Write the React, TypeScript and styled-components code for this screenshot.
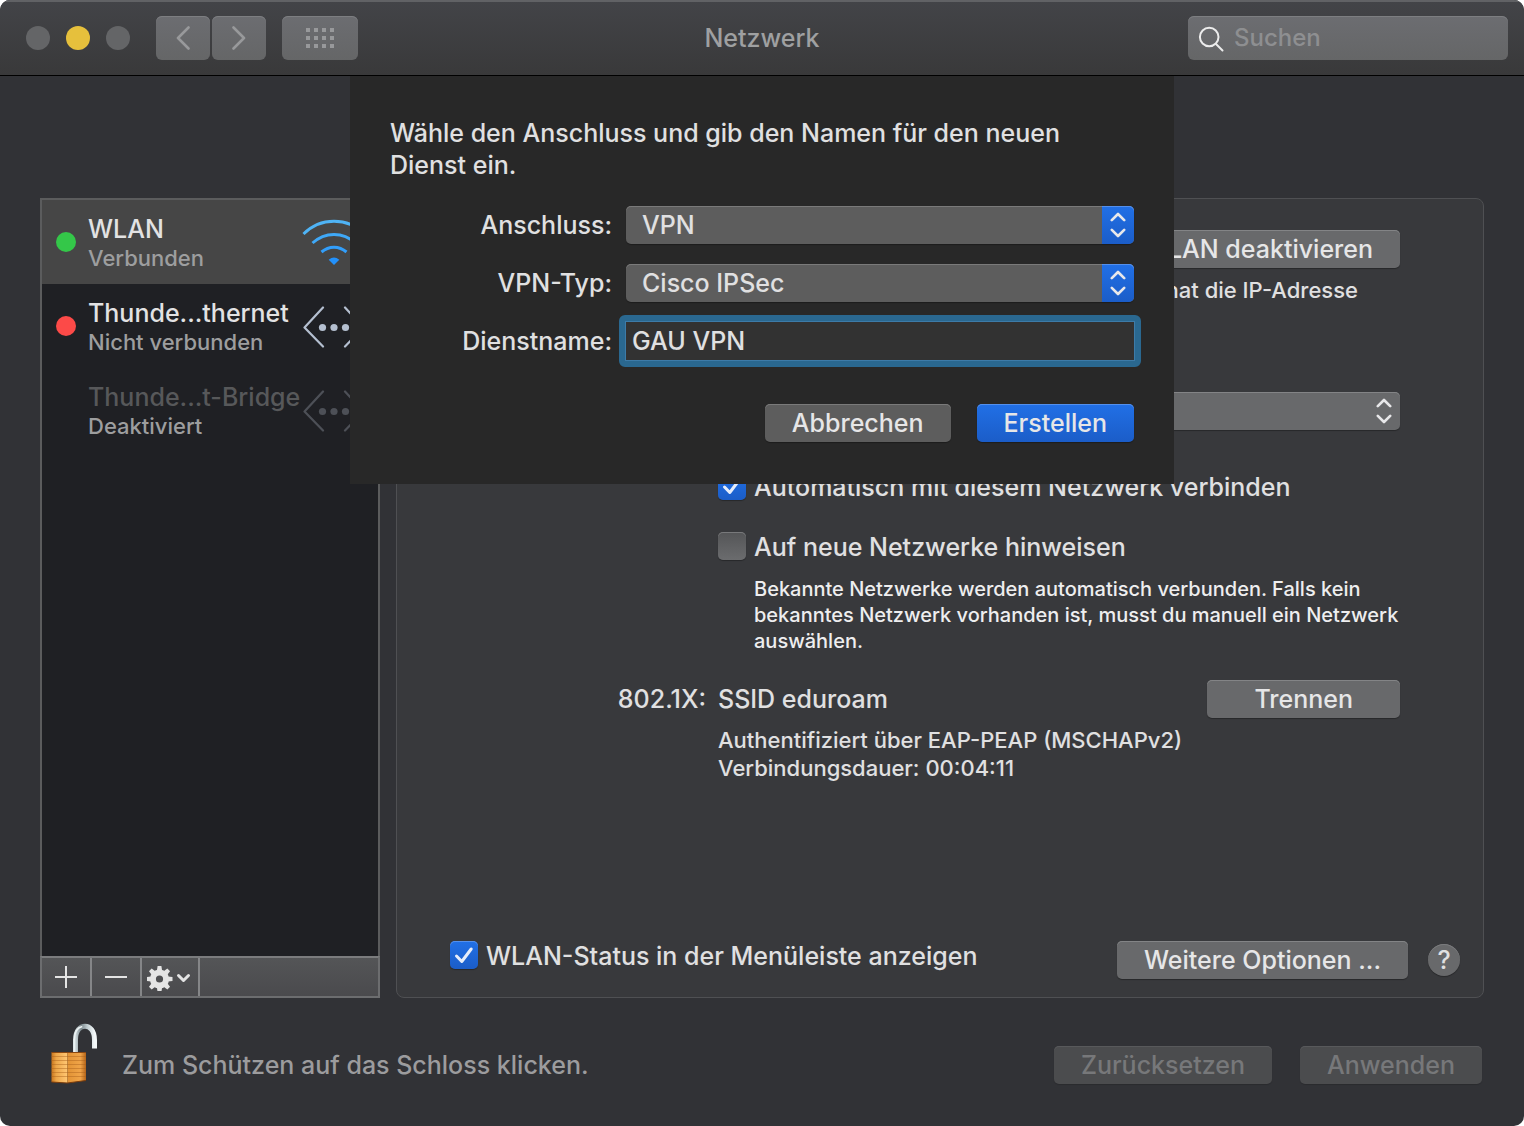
import React, { useState } from "react";
import styled, { createGlobalStyle, css } from "styled-components";

const GlobalStyle = createGlobalStyle`
  *, *::before, *::after { box-sizing: border-box; }
  body {
    margin: 0;
    background: #fff;
    color: #e0e0e1;
    font: 450 25px/32px Inter, "Liberation Sans", sans-serif;
  }
  button, input, select { font: inherit; color: inherit; margin: 0; }
  p, h1, h2, ul { margin: 0; padding: 0; font-weight: inherit; font-size: inherit; }
`;

const Window = styled.div`
  display: flex;
  flex-direction: column;
  min-height: 100vh;
  overflow: hidden;
  border-radius: 10px;
  background: #313236;
`;

/* ---------- title bar ---------- */

const TitleBar = styled.header`
  display: grid;
  grid-template-columns: 1fr auto 1fr;
  align-items: center;
  padding: 16px 16px 15px;
  border-bottom: 1px solid #000;
  background: linear-gradient(#434448, #39393a);
  box-shadow: inset 0 2px #616265;
`;

const TitleTools = styled.div`
  display: flex;
  align-items: center;
  padding-left: 10px;
`;

const TrafficLights = styled.div`
  display: flex;
  gap: 16px;
  margin-right: 26px;
`;

const Light = styled.button<{ $color: string }>`
  width: 24px;
  height: 24px;
  padding: 0;
  border: 0;
  border-radius: 50%;
  background: ${(p) => p.$color};
`;

const HistoryButtons = styled.div`
  display: flex;
  gap: 2px;
  margin-right: 16px;
`;

const ToolButton = styled.button<{ $wide?: boolean }>`
  display: grid;
  place-items: center;
  width: ${(p) => (p.$wide ? 76 : 54)}px;
  height: 44px;
  padding: 0;
  border: 0;
  border-radius: 6px;
  background: linear-gradient(#6c6d71, #656667);
  box-shadow: inset 0 1px #7d7e81;
  color: #98999b;
`;

const Title = styled.h1`
  color: #9fa0a1;
`;

const Search = styled.label`
  display: flex;
  align-items: center;
  justify-self: end;
  gap: 8px;
  width: 320px;
  height: 44px;
  padding: 0 10px;
  border-radius: 6px;
  background: linear-gradient(#6c6d71, #656667);
  box-shadow: inset 0 1px #7d7e81;
`;

const SearchInput = styled.input`
  flex: 1;
  min-width: 0;
  padding: 0;
  border: 0;
  outline: 0;
  background: none;
  font-size: 24px;
  &::placeholder { color: #8e8f91; opacity: 1; }
`;

/* ---------- shared controls ---------- */

const Button = styled.button<{ $kind?: "primary" | "sheet" | "panel" }>`
  height: 38px;
  padding: 0 27px;
  border: 0;
  border-radius: 5px;
  line-height: 38px;
  white-space: nowrap;
  color: #e6e6e7;
  background: #68696b;
  box-shadow: inset 0 1px #838486, 0 1px 1px rgba(0, 0, 0, 0.3);

  ${(p) => p.$kind === "sheet" && css`
    background: #5d5d5d;
    box-shadow: inset 0 1px #7a7a7a, 0 1px 1px rgba(0, 0, 0, 0.3);
  `}
  ${(p) => p.$kind === "primary" && css`
    background: linear-gradient(#2170e6, #1b5dc8);
    box-shadow: inset 0 1px #5490ec, 0 1px 1px rgba(0, 0, 0, 0.3);
  `}
  &:disabled {
    color: #77787a;
    background: #4b4c4e;
    box-shadow: inset 0 1px #58595b, 0 1px 1px rgba(0, 0, 0, 0.15);
  }
`;

const SelectBox = styled.div`
  display: grid;
  grid-template-columns: 1fr 32px;
  & > * { grid-row: 1; }
`;

const SelectInput = styled.select<{ $sheet?: boolean }>`
  grid-column: 1 / 3;
  appearance: none;
  width: 100%;
  height: 38px;
  padding: 0 40px 0 16px;
  border: 0;
  border-radius: 5px;
  outline: 0;
  background: ${(p) => (p.$sheet ? "#5d5d5d" : "#68696b")};
  box-shadow: inset 0 1px ${(p) => (p.$sheet ? "#7a7a7a" : "#838486")}, 0 1px 1px rgba(0, 0, 0, 0.3);
`;

const Stepper = styled.span<{ $blue?: boolean }>`
  grid-column: 2;
  display: grid;
  place-items: center;
  border-radius: 0 5px 5px 0;
  color: #e8e8ea;
  pointer-events: none;
  ${(p) => p.$blue && css`
    background: linear-gradient(#2170e6, #1b5dc8);
    box-shadow: inset 0 1px #5490ec;
  `}
`;

const CheckLabel = styled.label`
  display: flex;
  gap: 8px;
  height: 28px;
  line-height: 30px;
  white-space: nowrap;
`;

const CheckBox = styled.span`
  display: grid;
  width: 28px;
  height: 28px;
  & > * { grid-area: 1 / 1; }
  & > svg { pointer-events: none; }
`;

const CheckInput = styled.input`
  appearance: none;
  width: 28px;
  height: 28px;
  border-radius: 5px;
  background: linear-gradient(#545557, #6b6c6e);
  box-shadow: inset 0 1px #78797b, 0 1px 1px rgba(0, 0, 0, 0.3);
  &:checked {
    background: linear-gradient(#2170e6, #1b5dc8);
    box-shadow: inset 0 1px #5490ec, 0 1px 1px rgba(0, 0, 0, 0.3);
  }
`;

const SmallText = styled.p`
  font-size: 22px;
  line-height: 28px;
`;

/* ---------- window body ---------- */

const Body = styled.main`
  position: relative;
  flex: 1;
  display: flex;
  flex-direction: column;
  gap: 24px;
  padding: 122px 40px 42px;
`;

const Columns = styled.div`
  flex: 1;
  display: flex;
  gap: 16px;
`;

const Sidebar = styled.aside`
  flex: none;
  display: flex;
  flex-direction: column;
  width: 340px;
  border: 2px solid #5b5c5d;
  border-bottom: 0;
  background: #1f2024;
`;

const ServiceList = styled.ul`
  flex: 1;
  list-style: none;
`;

const Service = styled.li<{ $selected?: boolean }>`
  display: flex;
  align-items: center;
  gap: 12px;
  height: 84px;
  padding: 0 12px 0 14px;
  background: ${(p) => (p.$selected ? "#464646" : "transparent")};
`;

const StatusDot = styled.span<{ $color: string }>`
  flex: none;
  width: 20px;
  height: 20px;
  border-radius: 50%;
  background: ${(p) => p.$color};
`;

const ServiceText = styled.div`
  flex: 1;
  width: 0;
  padding-top: 2px;
  white-space: nowrap;
`;

const ServiceName = styled.h2<{ $off?: boolean }>`
  line-height: 30px;
  color: ${(p) => (p.$off ? "#57585a" : "#e2e2e3")};
`;

const ServiceState = styled(SmallText)`
  color: #9d9e9f;
`;

const ListTools = styled.div`
  display: flex;
  height: 42px;
  margin: 0 -2px;
  border: 2px solid #6c6d6f;
  border-top-color: #7b7c7e;
  background: linear-gradient(#545557, #4a4a4d);
`;

const ListTool = styled.button<{ $wide?: boolean }>`
  display: grid;
  place-items: center;
  width: ${(p) => (p.$wide ? 58 : 50)}px;
  padding: 0;
  border: 0;
  border-right: 2px solid #858688;
  background: none;
  color: #e4e4e4;
`;

const Panel = styled.section`
  flex: 1;
  display: flex;
  flex-direction: column;
  padding: 31px 23px 18px 53px;
  border: 1px solid #4f5053;
  border-radius: 8px;
  background: #38393c;
`;

const Settings = styled.div`
  display: grid;
  grid-template-columns: 256px 1fr;
  column-gap: 12px;
  margin-right: 60px;
`;

const Field = styled.div<{ $after: number }>`
  grid-column: 2;
  display: flex;
  flex-direction: column;
  margin-bottom: ${(p) => p.$after}px;
`;

const StatusField = styled(Field)`
  align-items: flex-end;
  gap: 8px;
`;

const StatusText = styled(SmallText)`
  margin-right: 42px;
`;

const Hint = styled.p`
  margin: 16px 0 0 36px;
  font-size: 20px;
  font-weight: 500;
  line-height: 26px;
  color: #eeeeef;
`;

const FieldName = styled.span`
  line-height: 38px;
  text-align: right;
`;

const Connection = styled.div`
  display: flex;
  flex-direction: column;
  gap: 8px;
`;

const ConnectionHead = styled.div`
  display: flex;
  justify-content: space-between;
  line-height: 38px;
`;

const DisconnectButton = styled(Button)`
  padding: 0 47px;
`;

const PanelFoot = styled.div`
  display: flex;
  align-items: flex-start;
  justify-content: space-between;
  margin-top: auto;
`;

const PanelActions = styled.div`
  display: flex;
  align-items: center;
  gap: 20px;
`;

const HelpButton = styled.button`
  width: 32px;
  height: 32px;
  padding: 0;
  border: 0;
  border-radius: 50%;
  background: #68696b;
  box-shadow: inset 0 1px #7b7c7e, 0 1px 1px rgba(0, 0, 0, 0.3);
  line-height: 32px;
`;

const Footer = styled.footer`
  display: flex;
  align-items: flex-end;
  gap: 24px;
  padding: 0 2px 0 10px;
`;

const LockButton = styled.button`
  display: flex;
  align-items: flex-end;
  gap: 24px;
  margin-right: auto;
  padding: 0;
  border: 0;
  background: none;
  line-height: 38px;
  color: #9c9c9e;
`;

const FooterActions = styled.div`
  display: flex;
  gap: 28px;
`;

/* ---------- sheet ---------- */

const Sheet = styled.form`
  position: absolute;
  top: 0;
  left: 0;
  right: 0;
  width: 824px;
  margin: 0 auto;
  padding: 41px 40px 42px;
  background: #282828;
`;

const SheetFields = styled.div`
  display: grid;
  grid-template-columns: 222px 1fr;
  gap: 20px 14px;
  margin: 25px 0 44px;
`;

const SheetLabel = styled.label`
  line-height: 38px;
  text-align: right;
`;

const NameInput = styled.input`
  height: 52px;
  margin: -7px;
  padding: 0 7px;
  border: 6px solid #2a6890;
  border-radius: 6px;
  outline: 0;
  background: #323232;
  box-shadow: inset 0 0 0 1px #3d7ba8;
`;

const SheetActions = styled.div`
  display: flex;
  justify-content: flex-end;
  gap: 26px;
`;

/* ---------- drawings ---------- */

const line = { fill: "none", stroke: "currentColor", strokeLinecap: "round", strokeLinejoin: "round" } as const;

const Chevron = ({ d }: { d: string }) => (
  <svg width="14" height="24" viewBox="0 0 14 24" {...line} strokeWidth="2.6" aria-hidden="true">
    <path d={d} />
  </svg>
);

const GridIcon = () => (
  <svg width="28" height="20" viewBox="0 0 28 20" fill="currentColor" aria-hidden="true">
    {[0, 8, 16].map((y) => [0, 8, 16, 24].map((x) => <rect key={`${x}-${y}`} x={x} y={y} width="4" height="4" />))}
  </svg>
);

const SearchIcon = () => (
  <svg width="28" height="28" viewBox="0 0 28 28" {...line} stroke="#ececec" strokeWidth="2" aria-hidden="true">
    <circle cx="11.2" cy="13" r="9.3" />
    <path d="M18 20l6.500 6.500" />
  </svg>
);

const UpDown = () => (
  <svg width="16" height="26" viewBox="0 0 16 26" {...line} strokeWidth="2.6" aria-hidden="true">
    <path d="M1.8 8.2L8 2l6.200 6.200M1.800 17.800L8 24l6.200-6.200" />
  </svg>
);

const CheckMark = () => (
  <svg width="28" height="28" viewBox="0 0 28 28" {...line} stroke="#e6edfa" strokeWidth="3" aria-hidden="true">
    <path d="M6.500 15l5.300 5.500L21.200 8" />
  </svg>
);

const WifiIcon = () => (
  <svg width="64" height="48" viewBox="0 -1 64 48" fill="none" strokeWidth="3" aria-hidden="true">
    <path stroke="#4fb4f6" d="M1.500 15C18.500-2 45.500-2 62.500 15" />
    <path stroke="#3fa9f8" d="M10.500 24c12.500-11.500 30.500-11.500 43 0" />
    <path stroke="#329efa" d="M19.500 33c7.500-6.500 17.500-6.500 25 0" />
    <path fill="#2391fb" d="M26.700 40.800q5.300-4.800 10.600 0L32 46z" />
  </svg>
);

const EthernetIcon = ({ color }: { color: string }) => (
  <svg width="64" height="44" viewBox="0 -1 64 44" {...line} stroke={color} strokeWidth="2.200" aria-hidden="true">
    <path d="M21 2.500L2.500 22.500 21 41.500M43 2.500l18.500 20L43 41.500" />
    <g fill={color} stroke="none">
      <circle cx="20.500" cy="22.500" r="3.600" />
      <circle cx="32" cy="22.500" r="3.600" />
      <circle cx="43.500" cy="22.500" r="3.600" />
    </g>
  </svg>
);

const PlusMinus = ({ plus }: { plus?: boolean }) => (
  <svg width="22" height="22" viewBox="0 0 22 22" stroke="currentColor" strokeWidth="2" aria-hidden="true">
    <path d={plus ? "M0 11h22M11 0v22" : "M0 11h22"} />
  </svg>
);

const GearMenu = () => (
  <svg width="46" height="28" viewBox="1 -1 46 28" aria-hidden="true">
    <circle cx="13.500" cy="15" r="6.600" fill="none" stroke="currentColor" strokeWidth="6" />
    {[0, 45, 90, 135, 180, 225, 270, 315].map((a) => (
      <path key={a} fill="currentColor" transform={`rotate(${a} 13.500 15)`} d="M10.900 6.500l.7-4.500h3.800l.7 4.500z" />
    ))}
    <path {...line} strokeWidth="3" d="M32.500 11.500l5 5 5-5" />
  </svg>
);

const LockIcon = () => (
  <svg width="48" height="62" viewBox="0 0 48 62" aria-hidden="true">
    <defs>
      <linearGradient id="front" x1="0" x2="1">
        <stop offset="0" stopColor="#c9751d" />
        <stop offset="0.300" stopColor="#eda648" />
        <stop offset="1" stopColor="#ffc673" />
      </linearGradient>
      <linearGradient id="side" x1="0" x2="1">
        <stop offset="0" stopColor="#e29335" />
        <stop offset="0.700" stopColor="#f0a448" />
        <stop offset="1" stopColor="#b4651a" />
      </linearGradient>
      <linearGradient id="steel" x1="0" x2="1">
        <stop offset="0" stopColor="#d3dde0" />
        <stop offset="0.300" stopColor="#7b888d" />
        <stop offset="0.650" stopColor="#c3cfd3" />
        <stop offset="1" stopColor="#f3f8f9" />
      </linearGradient>
    </defs>
    <path d="M25.500 32V18C25.500-0.500 44.500-0.500 44.500 18v8.500" fill="none" stroke="url(#steel)" strokeWidth="5" />
    <path d="M24.300 31V18c0-8 3.500-12.500 8-13.500" fill="none" stroke="#eef4f5" strokeWidth="1.300" />
    <path d="M1.500 30.500h15.800V61L1.500 60z" fill="url(#front)" />
    <path d="M17.300 30.500H36v28L17.300 61z" fill="url(#side)" />
    <path d="M1.500 30.500H36" stroke="#8a4812" strokeWidth="1.200" />
    <path d="M1.500 34.500h34.500M1.500 38.500h34.500M1.500 42.500h34.500M1.500 46.500h34.500M1.500 50.500h34.500M1.500 54.500h34.500" stroke="#a9601a" strokeOpacity="0.450" strokeWidth="1.100" />
    <path d="M1.500 60l15.800 1L36 58.500" fill="none" stroke="#7c3d0c" strokeWidth="1.200" />
  </svg>
);

/* ---------- composed parts ---------- */

type CheckProps = { label: string; initial?: boolean };

const Check = ({ label, initial = false }: CheckProps) => {
  const [checked, setChecked] = useState(initial);
  return (
    <CheckLabel>
      <CheckBox>
        <CheckInput type="checkbox" checked={checked} onChange={(e) => setChecked(e.target.checked)} />
        {checked && <CheckMark />}
      </CheckBox>
      {label}
    </CheckLabel>
  );
};

type ServiceRow = { name: string; state: string; dot: string; icon: React.ReactNode; selected?: boolean; off?: boolean };

const services: ServiceRow[] = [
  { name: "WLAN", state: "Verbunden", dot: "#34c749", icon: <WifiIcon />, selected: true },
  { name: "Thunde...thernet", state: "Nicht verbunden", dot: "#fc4a48", icon: <EthernetIcon color="#b4bfd0" /> },
  { name: "Thunde...t-Bridge", state: "Deaktiviert", dot: "transparent", icon: <EthernetIcon color="#4d5057" />, off: true },
];

export default function App() {
  const [service, setService] = useState("GAU VPN");

  return (
    <>
      <GlobalStyle />
      <Window>
        <TitleBar>
          <TitleTools>
            <TrafficLights>
              <Light $color="#646567" aria-label="Schließen" />
              <Light $color="#e6c03c" aria-label="Minimieren" />
              <Light $color="#646567" aria-label="Vergrößern" />
            </TrafficLights>
            <HistoryButtons>
              <ToolButton aria-label="Zurück"><Chevron d="M12.500 1.500L2 12l10.500 10.500" /></ToolButton>
              <ToolButton aria-label="Vorwärts"><Chevron d="M1.500 1.500L12 12 1.500 22.500" /></ToolButton>
            </HistoryButtons>
            <ToolButton $wide aria-label="Alle einblenden"><GridIcon /></ToolButton>
          </TitleTools>
          <Title>Netzwerk</Title>
          <Search>
            <SearchIcon />
            <SearchInput type="text" placeholder="Suchen" aria-label="Suchen" />
          </Search>
        </TitleBar>

        <Body>
          <Columns>
            <Sidebar>
              <ServiceList>
                {services.map((s) => (
                  <Service key={s.name} $selected={s.selected}>
                    <StatusDot $color={s.dot} />
                    <ServiceText>
                      <ServiceName $off={s.off}>{s.name}</ServiceName>
                      <ServiceState>{s.state}</ServiceState>
                    </ServiceText>
                    {s.icon}
                  </Service>
                ))}
              </ServiceList>
              <ListTools>
                <ListTool aria-label="Hinzufügen"><PlusMinus plus /></ListTool>
                <ListTool aria-label="Entfernen"><PlusMinus /></ListTool>
                <ListTool $wide aria-label="Aktionen"><GearMenu /></ListTool>
              </ListTools>
            </Sidebar>

            <Panel>
              <Settings>
                <StatusField $after={88}>
                  <Button>WLAN deaktivieren</Button>
                  <StatusText>hat die IP-Adresse</StatusText>
                </StatusField>
                <Field $after={42}>
                  <SelectBox>
                    <SelectInput aria-label="Netzwerkname"><option>eduroam</option></SelectInput>
                    <Stepper><UpDown /></Stepper>
                  </SelectBox>
                </Field>
                <Field $after={32}>
                  <Check label="Automatisch mit diesem Netzwerk verbinden" initial />
                </Field>
                <Field $after={26}>
                  <Check label="Auf neue Netzwerke hinweisen" />
                  <Hint>
                    Bekannte Netzwerke werden automatisch verbunden. Falls kein bekanntes Netzwerk vorhanden ist,
                    musst du manuell ein Netzwerk auswählen.
                  </Hint>
                </Field>
                <FieldName>802.1X:</FieldName>
                <Connection>
                  <ConnectionHead>
                    <span>SSID eduroam</span>
                    <DisconnectButton>Trennen</DisconnectButton>
                  </ConnectionHead>
                  <div>
                    <SmallText>Authentifiziert über EAP-PEAP (MSCHAPv2)</SmallText>
                    <SmallText>Verbindungsdauer: 00:04:11</SmallText>
                  </div>
                </Connection>
              </Settings>
              <PanelFoot>
                <Check label="WLAN-Status in der Menüleiste anzeigen" initial />
                <PanelActions>
                  <Button>Weitere Optionen ...</Button>
                  <HelpButton aria-label="Hilfe">?</HelpButton>
                </PanelActions>
              </PanelFoot>
            </Panel>
          </Columns>

          <Footer>
            <LockButton>
              <LockIcon />
              Zum Schützen auf das Schloss klicken.
            </LockButton>
            <FooterActions>
              <Button disabled>Zurücksetzen</Button>
              <Button disabled>Anwenden</Button>
            </FooterActions>
          </Footer>

          <Sheet onSubmit={(e) => e.preventDefault()}>
            <p>Wähle den Anschluss und gib den Namen für den neuen Dienst ein.</p>
            <SheetFields>
              <SheetLabel htmlFor="port">Anschluss:</SheetLabel>
              <SelectBox>
                <SelectInput $sheet id="port"><option>VPN</option></SelectInput>
                <Stepper $blue><UpDown /></Stepper>
              </SelectBox>
              <SheetLabel htmlFor="vpn-type">VPN-Typ:</SheetLabel>
              <SelectBox>
                <SelectInput $sheet id="vpn-type"><option>Cisco IPSec</option></SelectInput>
                <Stepper $blue><UpDown /></Stepper>
              </SelectBox>
              <SheetLabel htmlFor="service-name">Dienstname:</SheetLabel>
              <NameInput id="service-name" value={service} onChange={(e) => setService(e.target.value)} />
            </SheetFields>
            <SheetActions>
              <Button type="button" $kind="sheet">Abbrechen</Button>
              <Button type="submit" $kind="primary">Erstellen</Button>
            </SheetActions>
          </Sheet>
        </Body>
      </Window>
    </>
  );
}
